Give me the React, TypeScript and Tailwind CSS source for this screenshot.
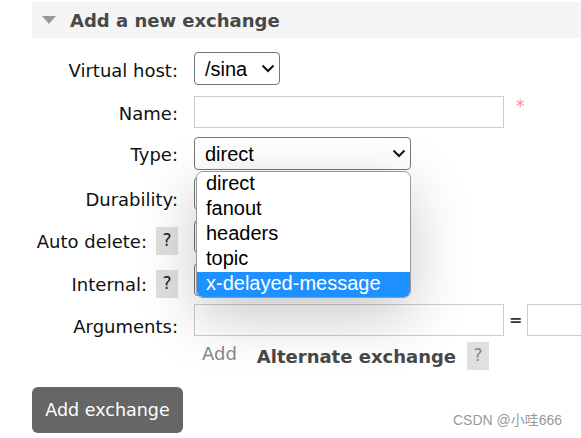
import type { ReactNode } from "react";

const sans = { fontFamily: '"DejaVu Sans", Verdana, sans-serif' };
const ui = { fontFamily: '"Liberation Sans", Arial, sans-serif' };

function Chevron() {
  return (
    <svg width="14" height="9" viewBox="0 0 14 9" className="shrink-0">
      <polyline points="1.5,1.5 7,7 12.5,1.5" fill="none" stroke="#111" strokeWidth="2" />
    </svg>
  );
}

function Help({ muted }: { muted?: boolean }) {
  return (
    <span
      className={`inline-flex h-[28px] w-[22px] shrink-0 items-center justify-center bg-[#e0e0e0] text-[17px] ${
        muted ? "text-[#888]" : "text-[#222]"
      }`}
    >
      ?
    </span>
  );
}

interface RowProps {
  label: string;
  help?: boolean;
  top: string;
  shift?: string;
  children: ReactNode;
}

function Row({ label, help, top, shift = "", children }: RowProps) {
  return (
    <div className={`flex h-[33px] items-center ${top}`}>
      <div
        className={`flex w-[146px] shrink-0 items-center justify-end gap-[9px] whitespace-nowrap text-[18px] text-[#111] ${shift}`}
      >
        <span>{label}</span>
        {help && <Help />}
      </div>
      <div className="ml-[16px] flex shrink-0 items-center">{children}</div>
    </div>
  );
}

function Select({ value, width }: { value?: string; width: string }) {
  return (
    <div
      className={`flex h-[33px] items-center justify-between rounded-[4px] border border-[#767676] bg-white pl-[10px] pr-[4px] text-[20px] text-black ${width}`}
      style={ui}
    >
      <span>{value}</span>
      <Chevron />
    </div>
  );
}

const options = ["direct", "fanout", "headers", "topic", "x-delayed-message"];

export default function App() {
  return (
    <div className="relative h-[438px] w-[581px] overflow-hidden bg-white" style={sans}>
      <div className="ml-[32px] mt-[2px] flex h-[36px] items-center bg-[#f5f5f5]">
        <svg width="14" height="8" viewBox="0 0 14 8" className="ml-[10px]">
          <polygon points="0,0 14,0 7,8" fill="#999" />
        </svg>
        <span className="ml-[14px] text-[18px] font-bold text-[#484848]">Add a new exchange</span>
      </div>

      <div className="ml-[32px] flex flex-col">
        <Row label="Virtual host:" top="mt-[14px]" shift="pt-[3px]">
          <div className="pr-[8px]">
            <Select value="/sina" width="w-[86px]" />
          </div>
        </Row>
        <Row label="Name:" top="mt-[10px]" shift="pt-[4px]">
          <div className="h-[32px] w-[310px] border border-[#ccc] bg-white" />
          <span className="ml-[12px] -mt-[10px] text-[17px] text-[#f88]">*</span>
        </Row>
        <Row label="Type:" top="mt-[9px]" shift="pt-[1px]">
          <Select value="direct" width="w-[217px]" />
        </Row>
        <Row label="Durability:" top="mt-[7px]" shift="pt-[12px]">
          <Select width="w-[120px]" />
        </Row>
        <Row label="Auto delete:" help top="mt-[10px]" shift="pt-[9px]">
          <Select width="w-[70px]" />
        </Row>
        <Row label="Internal:" help top="mt-[10px]" shift="pt-[9px]">
          <Select width="w-[70px]" />
        </Row>
        <Row label="Arguments:" top="mt-[7px]" shift="pt-[13px]">
          <div className="h-[32px] w-[310px] border border-[#ccc] bg-white" />
          <span className="ml-[5px] w-[11px] text-[16px] font-bold text-[#333]">=</span>
          <div className="ml-[7px] h-[32px] w-[120px] border border-[#ccc] bg-white" />
        </Row>

        <div className="ml-[170px] mt-[6px] flex h-[28px] items-center">
          <span className="-mt-[6px] text-[18px] text-[#888]">Add</span>
          <span className="ml-[20px] pt-[1px] text-[18px] font-bold text-[#484848]">Alternate exchange</span>
          <span className="ml-[11px]">
            <Help muted />
          </span>
        </div>

        <div className="mt-[17px] flex">
          <button className="flex h-[46px] w-[151px] items-center justify-center rounded-[6px] bg-[#666] text-[17.5px] text-white">
            Add exchange
          </button>
        </div>
      </div>

      {/* open select list */}
      <div
        className="absolute left-[196px] top-[171px] w-[215px] overflow-hidden rounded-[7px] border border-[#9a9a9a] bg-white text-[20px] text-black shadow-[0_18px_60px_rgba(0,0,0,0.22)]"
        style={ui}
      >
        {options.map((o, i) => (
          <div
            key={o}
            className={`flex h-[25px] items-center pb-[4px] pl-[9px] ${
              i === options.length - 1 ? "bg-[#1e90ff] text-white" : ""
            }`}
          >
            {o}
          </div>
        ))}
      </div>

      <div
        className="absolute left-[453px] top-[410px] text-[14px] text-[#999]"
        style={{ fontFamily: '"Liberation Sans", Arial, "Noto Sans CJK SC", sans-serif' }}
      >
        CSDN @小哇666
      </div>
    </div>
  );
}
